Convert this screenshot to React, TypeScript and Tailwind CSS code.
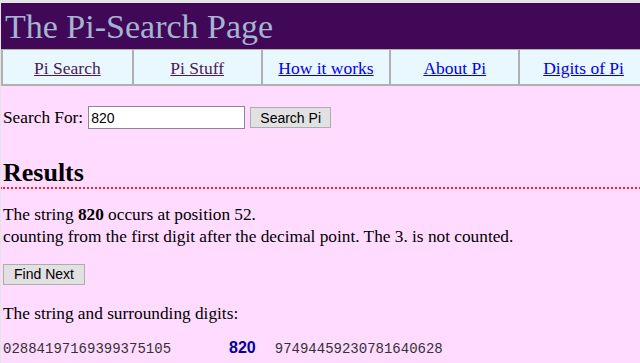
import React from "react";

const navItems = [
  { label: "Pi Search", visited: true },
  { label: "Pi Stuff", visited: true },
  { label: "How it works", visited: false },
  { label: "About Pi", visited: false },
  { label: "Digits of Pi", visited: false },
];

export default function App() {
  return (
    <div
      className="min-h-screen overflow-hidden bg-[#ffdcff] border-t-[3px] border-l border-[#e4e4e4] text-black"
      style={{ fontFamily: '"Liberation Serif", "Times New Roman", serif' }}
    >
      {/* Header */}
      <div className="h-[46px] bg-[#400857] pl-1 flex items-center">
        <h1 className="text-[34px] leading-none text-[#a4b4d2] pt-[2px]">The Pi-Search Page</h1>
      </div>

      {/* Nav (wider than the window, clipped on the right) */}
      <div className="grid grid-cols-5 w-[648px] h-[37px] bg-[#e9f7fe] border-2 border-t border-[#b0b0b0]">
        {navItems.map((item, i) => (
          <div
            key={item.label}
            className={`flex items-center justify-center text-[17.5px] pt-[2px] ${i > 0 ? "border-l-2 border-[#b0b0b0]" : ""}`}
          >
            <a
              href="#"
              className={`underline ${item.visited ? "text-[#4a1a5a]" : "text-[#0000ee]"}`}
            >
              {item.label}
            </a>
          </div>
        ))}
      </div>

      {/* Content */}
      <div className="px-[2px]">
        <div className="flex items-center mt-[19px] text-[17.3px]">
          <span>Search For:</span>
          <input
            defaultValue="820"
            className="ml-[5px] w-[157px] h-[23px] bg-white border border-[#8a8a8a] px-[2px] text-[14px] outline-none"
            style={{ fontFamily: '"Liberation Sans", Arial, sans-serif' }}
          />
          <button
            className="ml-[5px] w-[81px] h-[21px] bg-[#e1e1e1] border border-[#adadad] text-[14px] text-black leading-none"
            style={{ fontFamily: '"Liberation Sans", Arial, sans-serif' }}
          >
            Search Pi
          </button>
        </div>

        <h2 className="mt-[28px] text-[26px] font-bold leading-[28px]">Results</h2>
        <div className="-mx-[3px] h-0 border-0 border-b-2 border-dotted border-b-[#ff2020]" />

        <p className="mt-[15px] text-[17.3px] leading-[22px]">
          The string <b>820</b> occurs at position 52.
          <br />
          counting from the first digit after the decimal point. The 3. is not counted.
        </p>

        <button
          className="mt-[16px] w-[82px] h-[21px] bg-[#e1e1e1] border border-[#adadad] text-[14px] text-black leading-none"
          style={{ fontFamily: '"Liberation Sans", Arial, sans-serif' }}
        >
          Find Next
        </button>

        <p className="mt-[17px] text-[17.3px] leading-[22px]">The string and surrounding digits:</p>

        <div
          className="mt-[13px] flex items-baseline text-[14px] text-[#333] whitespace-pre leading-[20px]"
          style={{ fontFamily: '"Liberation Mono", "Courier New", monospace' }}
        >
          <span>02884197169399375105</span>
          <span
            className="ml-[58px] mr-[19px] font-bold text-[16px] text-[#0000a0]"
            style={{ fontFamily: '"Liberation Sans", Arial, sans-serif' }}
          >
            820
          </span>
          <span>97494459230781640628</span>
        </div>
      </div>
    </div>
  );
}
